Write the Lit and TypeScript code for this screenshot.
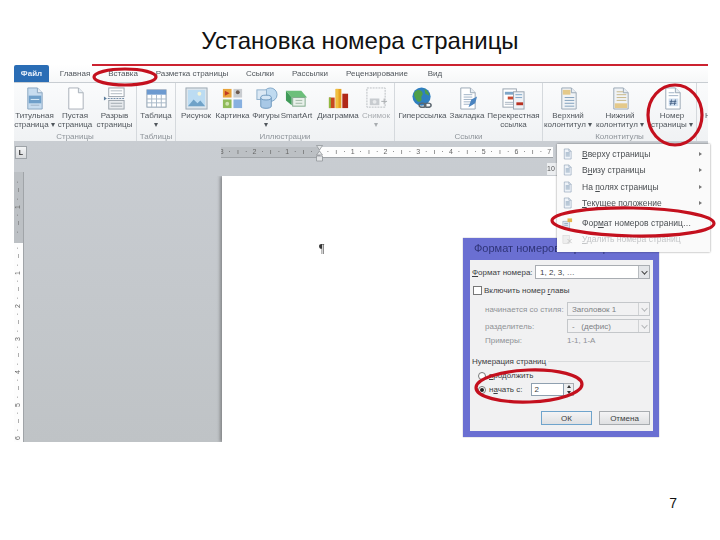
import { LitElement, html, css, svg } from "lit";
import { customElement } from "lit/decorators.js";

const page = (body: unknown, fill = "#fff", stroke = "#9aa7b5") => svg`<path d="M5 1h10l5 5v17H5z" fill="${fill}" stroke="${stroke}"/><path d="M15 1v5h5" fill="#e8eef4" stroke="${stroke}"/>${body}`;
const lines = (y0: number, n: number, c = "#9fb2c6") => Array.from({ length: n }, (_, i) => svg`<path d="M8 ${y0 + i * 2.5}h9" stroke="${c}"/>`);

const ICONS: Record<string, unknown> = {
  title: page(svg`<rect x="6" y="9" width="13" height="8" fill="#6f9fc9"/><path d="M8 13h9" stroke="#dcecf8"/>${lines(19, 1)}`, "#c7dcef", "#8aa6c0"),
  blank: page(svg``, "#fff", "#a8b0b8"),
  brk: svg`<rect x="6" y="1" width="16" height="9" fill="#fff" stroke="#9aa3ab"/><path d="M8 4h12M8 7h12" stroke="#b0b8c0"/><rect x="6" y="14" width="16" height="9" fill="#e8ebee" stroke="#9aa3ab"/><path d="M8 17h12M8 20h12" stroke="#a0a8b0"/><path d="M1 10l3 2-3 2z" fill="#5c7d9c"/><path d="M5 12h18" stroke="#6f8aa5" stroke-dasharray="2 1"/>`,
  table: svg`<rect x="2" y="3" width="20" height="18" fill="#fff" stroke="#8a9cae"/><rect x="2" y="3" width="20" height="5" fill="#6d9ad0"/><path d="M2 12.500h20M2 16.500h20M7 8v13M12 8v13M17 8v13" stroke="#a8b8c8"/>`,
  picture: svg`<rect x="1" y="1" width="22" height="22" fill="#dfe6ec" stroke="#9aa7b2"/><rect x="3" y="3" width="18" height="17" fill="#bcdcf2"/><path d="M3 20l6-7 4 4 3-3 5 6z" fill="#6fa2c8"/><circle cx="15" cy="7" r="2" fill="#f5f5d8"/>`,
  clip: svg`<rect x="2" y="2" width="9" height="9" fill="#e9a33a"/><path d="M4 4l5 2.500-5 2.500z" fill="#c23b22"/><rect x="13" y="2" width="9" height="9" fill="#c9ccd0"/><circle cx="17.500" cy="5.500" r="2" fill="#6c5a50"/><rect x="2" y="13" width="9" height="9" fill="#8fbb58"/><circle cx="6.500" cy="17.500" r="2" fill="#cfe3b0"/><rect x="13" y="13" width="9" height="9" fill="#87b0e0"/>`,
  shapes: svg`<circle cx="16" cy="8" r="7" fill="#bfdaf0" stroke="#7fa6c8"/><rect x="2" y="3" width="10" height="10" fill="#dbe8f4" stroke="#8fb0cc"/><path d="M6 11v9c0 3 11 3 11 0v-9z" fill="#a8c8e6" stroke="#6d97bd"/><ellipse cx="11.500" cy="11" rx="5.500" ry="2.500" fill="#d5e6f5" stroke="#6d97bd"/>`,
  smart: svg`<path d="M1 4h16l6 7H7z" fill="#6cbf7a"/><path d="M1 4l6 7v8L1 14z" fill="#3f9a58"/><rect x="8" y="11" width="13" height="9" fill="#e8f0ea" stroke="#7fa98a"/><path d="M11 14h7M11 17h7" stroke="#a0b8a6"/>`,
  chart: svg`<rect x="2" y="11" width="6" height="11" fill="#c8481e"/><rect x="9" y="2" width="6" height="20" fill="#e8a020"/><rect x="9" y="2" width="3" height="20" fill="#f0c040"/><rect x="16" y="7" width="6" height="15" fill="#b02818"/><rect x="2" y="11" width="2" height="11" fill="#8fbb40"/>`,
  snap: svg`<rect x="2" y="1" width="19" height="20" fill="none" stroke="#b8bcc0" stroke-dasharray="2 1"/><rect x="5" y="12" width="10" height="7" fill="#c8ccd0"/><circle cx="10" cy="15.500" r="2" fill="#e8eaec"/><path d="M17 15h6M20 12v6" stroke="#a8acb0"/>`,
  globe: svg`<circle cx="11" cy="10" r="9.500" fill="#2f7fc0"/><path d="M4 5c3-3 7-2 8 1s-2 3-1 6-3 5-5 2-4-6-2-9zM14 2c3 1 5 4 5 7l-4-2z" fill="#4f9f48"/><ellipse cx="12" cy="19" rx="3.500" ry="2.200" fill="none" stroke="#5c6770" stroke-width="1.500"/><ellipse cx="17.500" cy="19" rx="3.500" ry="2.200" fill="none" stroke="#5c6770" stroke-width="1.500"/>`,
  mark: page(svg`${lines(8, 5)}<path d="M13 21l3-8 6-3-2 7z" fill="#4a84c0"/>`),
  xref: svg`<rect x="1" y="2" width="14" height="19" fill="#fff" stroke="#98a4b0"/><rect x="3" y="5" width="9" height="3" fill="#7fa6c8"/><rect x="6" y="10" width="8" height="3" fill="#c84830"/><path d="M3 16h9M3 18h9" stroke="#a8b4c0"/><rect x="12" y="5" width="11" height="18" fill="#eef2f6" stroke="#98a4b0"/><path d="M14 8h7M14 11h7" stroke="#7fa6c8"/><rect x="15" y="16" width="7" height="3" fill="#b83020"/>`,
  header: page(svg`<rect x="6" y="3" width="8" height="5" fill="#e4c98a"/><path d="M8 11h10M8 14h10M8 17h10M8 20h10" stroke="#7f9fbc"/>`, "#f0f3f6"),
  footer: page(svg`<path d="M8 5h7M8 8h10M8 11h10M8 14h10" stroke="#c8b888"/><rect x="6" y="17" width="13" height="5" fill="#e4c98a"/>`, "#f0f3f6"),
  num: page(svg`<path d="M8 6h6M8 9h10" stroke="#9fb2c6"/><rect x="8" y="12" width="10" height="8" fill="#cfdff0"/><path d="M11 13l-1 6M15 13l-1 6M9 15h7M9 17h7" stroke="#34527a" stroke-width=".8"/>`),
};

const GROUPS = [
  { name: "Страницы", w: 123, items: [
    { i: "title", a: "Титульная", b: "страница ▾", w: 41 },
    { i: "blank", a: "Пустая", b: "страница", w: 40 },
    { i: "brk", a: "Разрыв", b: "страницы", w: 39 },
  ] },
  { name: "Таблицы", w: 39, items: [{ i: "table", a: "Таблица", b: "▾", w: 38 }] },
  { name: "Иллюстрации", w: 219, items: [
    { i: "picture", a: "Рисунок", b: "", w: 40 },
    { i: "clip", a: "Картинка", b: "", w: 33 },
    { i: "shapes", a: "Фигуры", b: "▾", w: 34 },
    { i: "smart", a: "SmartArt", b: "", w: 27 },
    { i: "chart", a: "Диаграмма", b: "", w: 56 },
    { i: "snap", a: "Снимок", b: "▾", w: 20, off: true },
  ] },
  { name: "Ссылки", w: 148, items: [
    { i: "globe", a: "Гиперссылка", b: "", w: 55 },
    { i: "mark", a: "Закладка", b: "", w: 34 },
    { i: "xref", a: "Перекрестная", b: "ссылка", w: 59 },
  ] },
  { name: "Колонтитулы", w: 154, items: [
    { i: "header", a: "Верхний", b: "колонтитул ▾", w: 50 },
    { i: "footer", a: "Нижний", b: "колонтитул ▾", w: 54 },
    { i: "num", a: "Номер", b: "страницы ▾", w: 50 },
  ] },
];

const TABS = [
  { t: "Главная", w: 52 }, { t: "Вставка", w: 44 }, { t: "Разметка страницы", w: 94 },
  { t: "Ссылки", w: 42 }, { t: "Рассылки", w: 58 }, { t: "Рецензирование", w: 76 }, { t: "Вид", w: 40 },
];

const hMarks = Array.from({ length: 41 }, (_, i) => {
  const u = (i - 12) / 4;
  if (i % 4 === 0) return String(Math.abs(u));
  return i % 2 === 0 ? "ı" : "·";
});
hMarks[12] = "";

const vMarks = Array.from({ length: 32 }, (_, i) => {
  const k = i + 1;
  const u = (k - 8) / 4;
  if (k === 8) return "";
  if (k % 4 === 0) return String(Math.abs(u));
  return k % 2 === 0 ? "–" : "·";
});

const MENU = [
  { pre: "", u: "В", post: "верху страницы" },
  { pre: "В", u: "н", post: "изу страницы" },
  { pre: "На ", u: "п", post: "олях страницы" },
  { pre: "", u: "Т", post: "екущее положение" },
];

@customElement("app-root")
export class AppRoot extends LitElement {
  static styles = css`
    :host { display: block; position: relative; width: 720px; height: 540px; background: #fff; overflow: hidden; font-family: "Liberation Sans", Arial, sans-serif; }
    .title { height: 65px; box-sizing: border-box; padding-top: 27px; text-align: center; font-size: 24px; line-height: 28px; color: #111; }
    .win { margin-left: 14px; width: 694px; height: 377px; display: flex; flex-direction: column; filter: blur(.45px); font-size: 8px; color: #50565c; }
    .tabs { height: 18px; flex: none; display: flex; align-items: center; background: linear-gradient(#fff, #f6f7f8); border-bottom: 1px solid #c8cdd2; box-sizing: border-box; position: relative; }
    .tabs::before { content: ""; position: absolute; left: 78px; right: 0; top: -1px; height: 2px; background: #cc2230; }
    .file { width: 35px; height: 100%; background: #2a6db5; color: #e8f0fa; font-weight: 700; display: flex; align-items: center; justify-content: center; border-radius: 2px 2px 0 0; }
    .tab { display: flex; justify-content: center; white-space: nowrap; }
    .ribbon { height: 58px; flex: none; display: flex; background: linear-gradient(#fafbfc, #f0f2f4); }
    .group { height: 100%; box-sizing: border-box; border-right: 1px solid #d5d9dd; display: flex; flex-direction: column; flex: none; }
    .items { height: 49px; display: flex; flex: none; }
    .item { display: flex; flex-direction: column; align-items: center; flex: none; line-height: 9px; white-space: nowrap; color: #50565c; }
    .item svg { width: 23px; height: 23px; margin: 4px 0 1px; flex: none; }
    .item.off { color: #a8acb0; }
    .gname { text-align: center; color: #8e949a; line-height: 9px; }
    .cut { flex: 1; overflow: hidden; padding: 4px 0 0 8px; color: #50565c; line-height: 9px; white-space: nowrap; min-width: 0; }
    .cut svg { width: 23px; height: 23px; display: block; margin-bottom: 1px; }
    .work { flex: 1; display: grid; grid-template-columns: 208px 1fr; background: linear-gradient(#c9cdd2, #bfc3c6); }
    .left { display: flex; flex-direction: column; align-items: flex-start; min-height: 0; overflow: hidden; }
    .lbox { width: 12px; height: 13px; margin: 5px 0 13px 1px; background: linear-gradient(#f4f5f6, #d8dadd); border: 1px solid #9ea3a8; box-sizing: border-box; color: #222; font-size: 7px; font-weight: 700; line-height: 11px; text-align: center; }
    .vr { width: 9px; flex: 1; overflow: hidden; background: linear-gradient(#bcc0c4 0 71px, #fdfdfd 71px); box-shadow: 1px 0 0 #a0a4a8; padding-top: 6px; color: #666; display: flex; flex-direction: column; }
    .vr span { height: 8.25px; flex: none; line-height: 8.25px; text-align: center; font-size: 7px; transform: rotate(-90deg); }
    .right { display: flex; flex-direction: column; min-width: 0; }
    .strip { height: 35px; flex: none; padding-top: 6px; box-sizing: border-box; }
    .hr { width: 332px; height: 10px; display: flex; overflow: hidden; background: linear-gradient(90deg, #bcc0c4 0 99px, #fdfdfd 99px); box-shadow: 0 1px 0 #a0a4a8; margin-left: -1px; color: #666; }
    .hr span { width: 8.2px; flex: none; text-align: center; font-size: 7px; line-height: 10px; }
    .hr span:first-child { margin-left: -3.5px; }
    .marker { position: absolute; left: 316px; top: 145px; width: 7px; height: 17px; filter: blur(.3px); }
    .paper { flex: 1; background: #fff; box-shadow: -2px 0 3px rgba(60,60,60,.45); clip-path: inset(0 0 0 -6px); padding: 66px 0 0 97px; color: #333; font-size: 12px; line-height: 13px; font-family: "Liberation Serif", serif; }
    .menu { position: absolute; left: 557px; top: 144px; width: 153px; height: 108px; box-sizing: border-box; padding-top: 2px; background: #fafafa; box-shadow: 0 0 2px rgba(0,0,0,.45); font-size: 8.5px; color: #4a4e52; filter: blur(.4px); z-index: 3; }
    .mi { height: 16.300px; display: flex; align-items: center; white-space: nowrap; padding-left: 5px; }
    .mi svg { width: 11px; height: 12px; margin-right: 9px; flex: none; }
    .mi u { text-underline-offset: 1px; }
    .mi .tx { flex: 1; }
    .mi i { width: 0; height: 0; border-left: 3px solid #777; border-top: 2.500px solid transparent; border-bottom: 2.500px solid transparent; margin-right: 8px; }
    .mi.big { margin-top: 3px; height: 17px; }
    .mi.dis { color: #c4c6c8; }
    .stub { position: absolute; left: 547px; top: 163px; width: 10px; height: 12px; background: #eceef0; color: #555; font-size: 7px; line-height: 12px; filter: blur(.4px); }
    .dlg { position: absolute; left: 463px; top: 238px; width: 196px; height: 199px; box-sizing: border-box; background: #6a6fd2; padding: 0 6px 6px 7px; display: flex; flex-direction: column; filter: blur(.45px); z-index: 2; font-size: 8px; color: #3c3e42; box-shadow: 0 0 1px #8a8a9a; }
    .dt { height: 22px; flex: none; font-size: 11px; line-height: 20px; color: #2f3478; padding-left: 4px; white-space: nowrap; overflow: hidden; }
    .db { flex: 1; background: #f1f1f2; padding: 5px 3px 0 2px; display: flex; flex-direction: column; }
    .row { display: flex; align-items: center; flex: none; }
    .lab { flex: none; white-space: nowrap; }
    .sel { flex: none; box-sizing: border-box; height: 14px; background: #fff; border: 1px solid #a9adb2; display: flex; align-items: center; padding-left: 4px; position: relative; white-space: nowrap; }
    .sel b { position: absolute; right: 0; top: 0; bottom: 0; width: 10px; background: #e4e6e9; border-left: 1px solid #b8bcc0; display: flex; align-items: center; justify-content: center; }
    .sel b::after { content: ""; width: 4px; height: 4px; border-right: 1.200px solid #444; border-bottom: 1.200px solid #444; transform: translateY(-1px) rotate(45deg) scale(.9); }
    .dim { color: #8f9296; }
    .dim .sel { background: #f1f1f2; border-color: #c4c7ca; color: #7c7f84; }
    .dim .sel b { background: #f1f1f2; border-left-color: #d0d2d4; }
    .dim .sel b::after { border-color: #b4b6b8; }
    .chk { width: 9px; height: 9px; box-sizing: border-box; background: #fff; border: 1px solid #777; margin: 0 2px 0 1px; flex: none; }
    .leg { height: 12px; margin-top: 10px; }
    .leg::after { content: ""; flex: 1; height: 1px; background: #d8dadc; margin-left: 2px; }
    .radio { width: 8px; height: 8px; box-sizing: border-box; border-radius: 50%; border: 1px solid #777; background: #fff; margin: 0 3px 0 6px; flex: none; display: flex; align-items: center; justify-content: center; }
    .radio.on::after { content: ""; width: 4px; height: 4px; border-radius: 50%; background: #222; }
    .inp { width: 33px; height: 13px; margin-left: 9px; box-sizing: border-box; border: 1px solid #8fa0b0; background: #fff; padding-left: 2px; line-height: 11px; flex: none; }
    .spin { width: 10px; height: 13px; box-sizing: border-box; border: 1px solid #a9adb2; border-left: 0; background: #eceef0; display: flex; flex-direction: column; align-items: center; justify-content: space-around; flex: none; }
    .spin s { width: 0; height: 0; border-left: 2.500px solid transparent; border-right: 2.500px solid transparent; border-bottom: 3px solid #333; }
    .spin s + s { border-bottom: 0; border-top: 3px solid #333; }
    .btns { margin-top: 15px; justify-content: flex-end; gap: 7px; }
    .btn { height: 14px; box-sizing: border-box; width: 51px; display: flex; align-items: center; justify-content: center; background: linear-gradient(#f4f4f5, #dfe0e2); border: 1px solid #a8acb0; }
    .btn.ok { border-color: #6fa4cc; }
    .foot { margin-top: 53px; padding-right: 43px; text-align: right; font-size: 14px; line-height: 16px; color: #111; }
    .ov { position: absolute; left: 0; top: 0; width: 720px; height: 540px; pointer-events: none; z-index: 5; filter: blur(.5px); }
    .mt7 { margin-top: 7px; }
    .ind { margin: 3px 0 0 13px; }
    .ind.first { margin-top: 7px; }
    .mt3 { margin-top: 3px; }
    .mt4 { margin-top: 4px; }
    .w63 { width: 63px; }
    .w82 { width: 82px; }
    .w115 { width: 115px; }
    .w83 { width: 83px; }
  `;

  mini(body: unknown) {
    return html`<svg viewBox="0 0 24 24">${page(body, "#eef3f8", "#6f86a0")}</svg>`;
  }

  render() {
    return html`
      <div class="title">Установка номера страницы</div>
      <div class="win">
        <div class="tabs">
          <div class="file">Файл</div>
          ${TABS.map((t) => html`<div class="tab" style="width:${t.w}px">${t.t}</div>`)}
        </div>
        <div class="ribbon">
          ${GROUPS.map((g) => html`
            <div class="group" style="width:${g.w}px">
              <div class="items">
                ${g.items.map((it: any) => html`
                  <div class="item ${it.off ? "off" : ""}" style="width:${it.w}px">
                    <svg viewBox="0 0 24 24">${ICONS[it.i]}</svg>
                    <span>${it.a}</span><span>${it.b}</span>
                  </div>`)}
              </div>
              <div class="gname">${g.name}</div>
            </div>`)}
          <div class="cut"><svg viewBox="0 0 24 24">${ICONS.footer}</svg>Н</div>
        </div>
        <div class="work">
          <div class="left">
            <div class="lbox">L</div>
            <div class="vr">${vMarks.map((m) => html`<span>${m}</span>`)}</div>
          </div>
          <div class="right">
            <div class="strip"><div class="hr">${hMarks.map((m) => html`<span>${m}</span>`)}</div></div>
            <div class="paper">¶</div>
          </div>
        </div>
      </div>
      <div class="foot">7</div>

      <svg class="marker" viewBox="0 0 7 17">
        <path d="M.5.5h6L3.500 5zM3.500 6l3 4h-6zM.5 11h6v5h-6z" fill="#e4e6e8" stroke="#8a8e92" stroke-width=".7"/>
      </svg>
      <div class="stub">10</div>

      <div class="dlg">
        <div class="dt">Формат номеров страниц</div>
        <div class="db">
          <div class="row">
            <div class="lab w63"><u>Ф</u>ормат номера:</div>
            <div class="sel w115">1, 2, 3, …<b></b></div>
          </div>
          <div class="row mt7">
            <div class="chk"></div><div class="lab">Включить номер <u>г</u>лавы</div>
          </div>
          <div class="row dim ind first">
            <div class="lab w82">начинается со стиля:</div>
            <div class="sel w83">Заголовок 1<b></b></div>
          </div>
          <div class="row dim ind">
            <div class="lab w82">разделитель:</div>
            <div class="sel w83">-&nbsp;&nbsp; (дефис)<b></b></div>
          </div>
          <div class="row dim ind">
            <div class="lab w82">Примеры:</div><div class="lab">1-1, 1-A</div>
          </div>
          <div class="row leg"><div class="lab">Нумерация страниц</div></div>
          <div class="row mt4"><div class="radio"></div><div class="lab"><u>п</u>родолжить</div></div>
          <div class="row mt3">
            <div class="radio on"></div><div class="lab">н<u>а</u>чать с:</div>
            <div class="inp">2</div><div class="spin"><s></s><s></s></div>
          </div>
          <div class="row btns"><div class="btn ok">ОК</div><div class="btn">Отмена</div></div>
        </div>
      </div>

      <div class="menu">
        ${MENU.map((m) => html`
          <div class="mi">${this.mini(lines(9, 4, "#5f7f9f"))}<span class="tx">${m.pre}<u>${m.u}</u>${m.post}</span><i></i></div>`)}
        <div class="mi big">
          <svg viewBox="0 0 24 24"><rect x="2" y="8" width="15" height="15" fill="#dfe8f2" stroke="#7f93a8"/><path d="M12 2h10v8H12z" fill="#e4b850"/><path d="M5 13h8M5 17h8" stroke="#4a6f96"/></svg>
          <span class="tx">Фор<u>м</u>ат номеров страниц…</span>
        </div>
        <div class="mi dis">
          <svg viewBox="0 0 24 24"><rect x="2" y="4" width="14" height="18" fill="#eee" stroke="#ccc"/><path d="M12 12l9 9M21 12l-9 9" stroke="#c4c4c4" stroke-width="2"/></svg>
          <span class="tx"><u>У</u>далить номера страниц</span>
        </div>
      </div>

      <svg class="ov" viewBox="0 0 720 540" fill="none" stroke="#c4101e" stroke-width="3.2">
        <ellipse cx="125" cy="77" rx="31" ry="8"/>
        <ellipse cx="675" cy="115" rx="27" ry="30"/>
        <ellipse cx="633" cy="222" rx="81" ry="14" transform="rotate(1 633 222)"/>
        <ellipse cx="529" cy="386" rx="53" ry="16" transform="rotate(-2 529 386)"/>
      </svg>
    `;
  }
}
